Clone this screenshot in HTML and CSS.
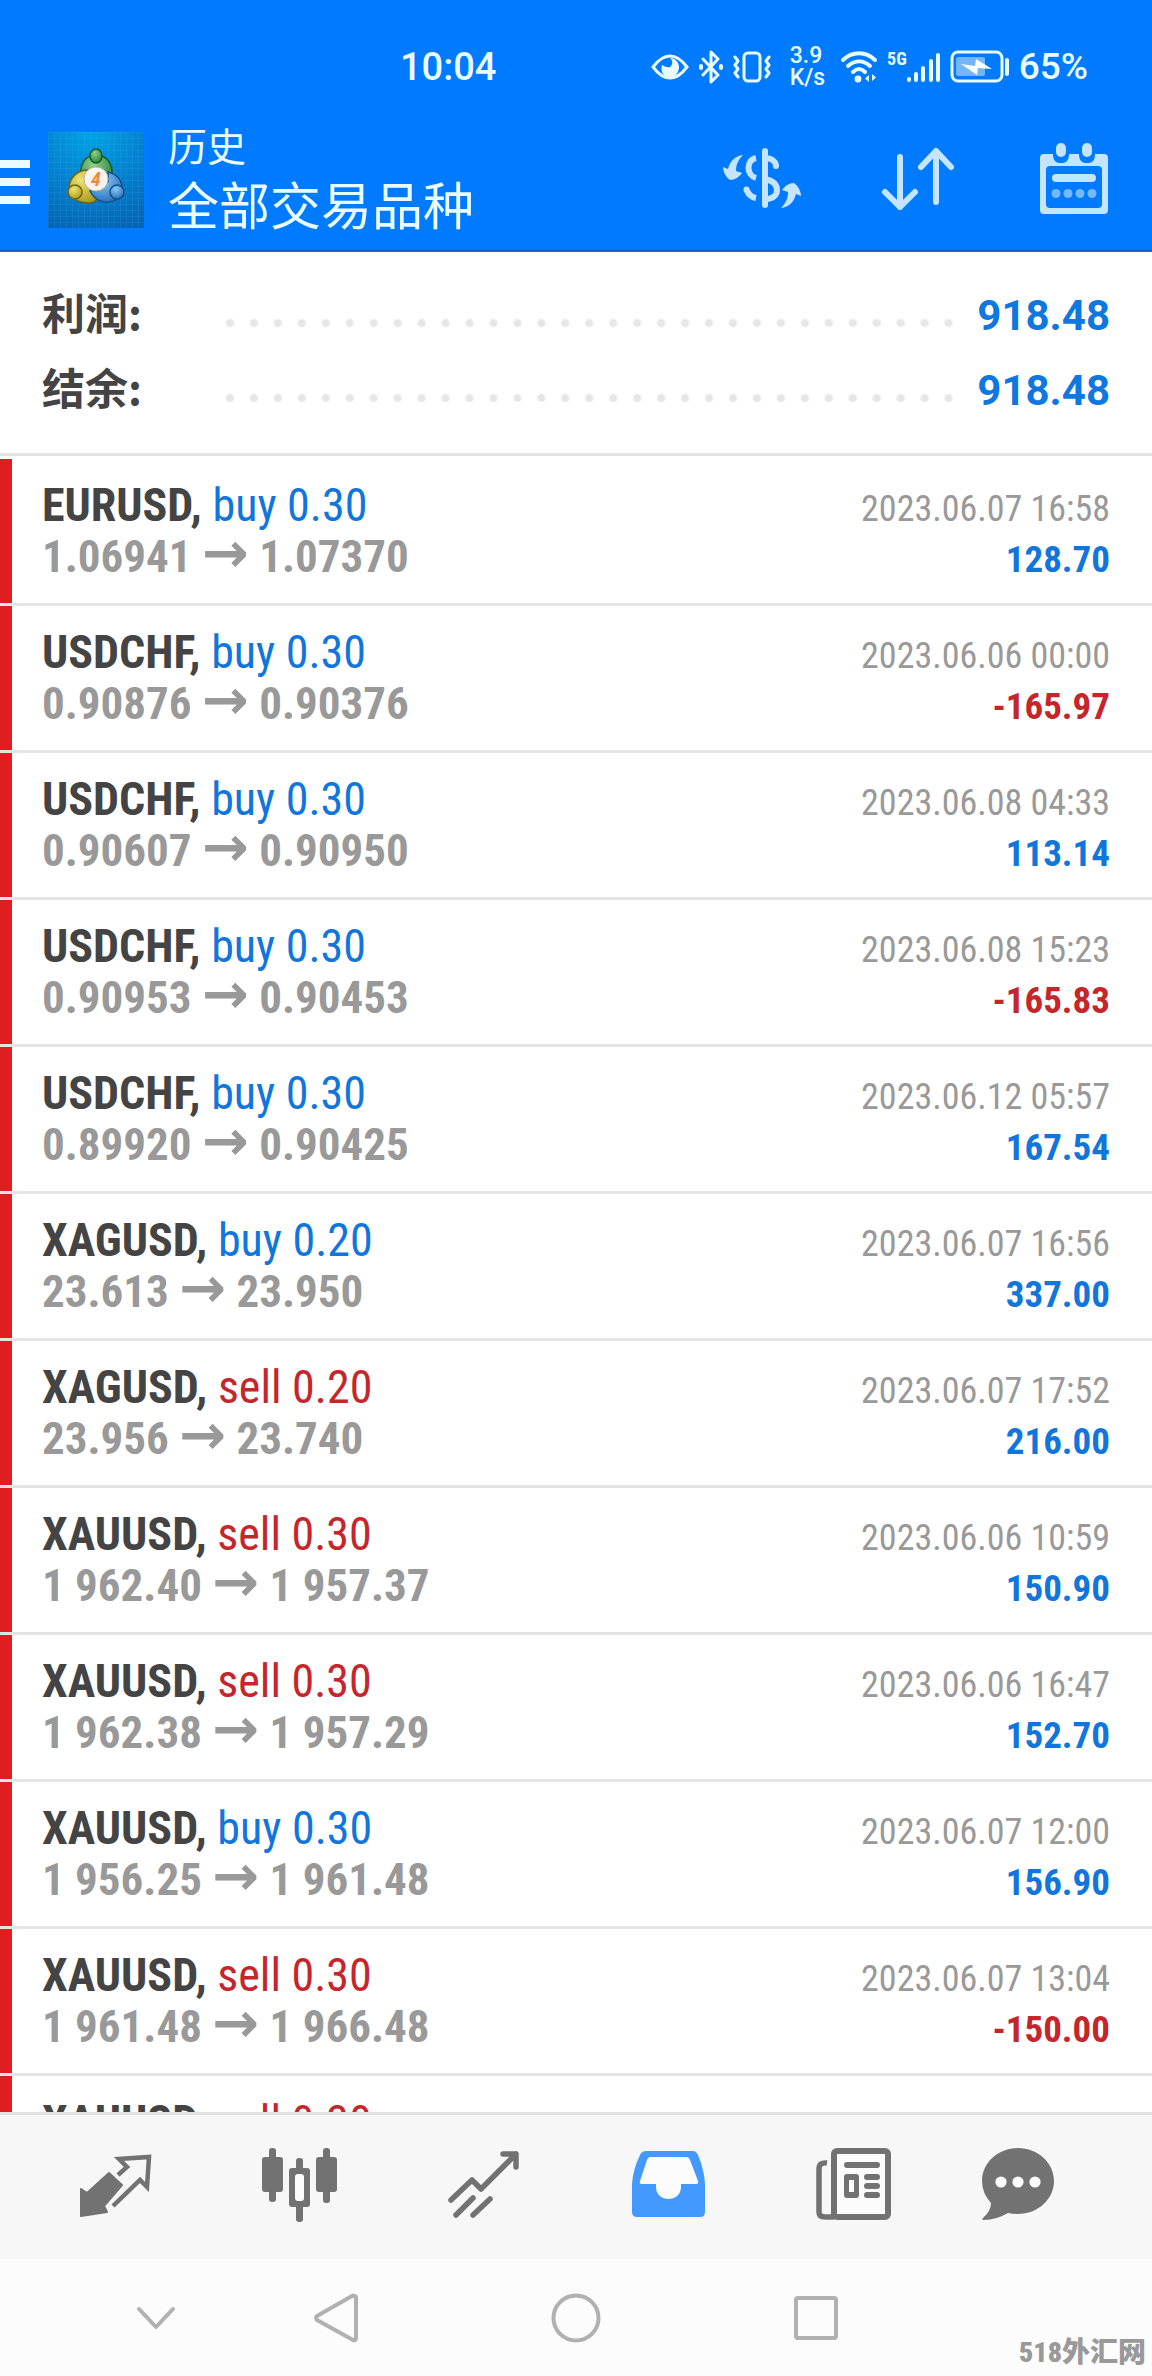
FILE: index.html
```html
<!DOCTYPE html>
<html lang="zh-CN">
<head>
<meta charset="utf-8">
<meta name="viewport" content="width=device-width, initial-scale=1">
<title>历史</title>
<link rel="stylesheet" href="styles.css">
</head>
<body>
<div class="app">
  <header class="header">
    <div class="status">
      <span class="clock">10:04</span>
      <div class="indicators">
        <svg width="38" height="28" viewBox="0 0 38 28"><path d="M2 14C8 6 13 3 19 3s11 3 17 11c-6 8-11 11-17 11S8 22 2 14z" fill="none" stroke="currentColor" stroke-width="3"/><path d="M19 5c3 2 3 7 0 9-3 1-6-1-8-2-2 7 2 12 8 12 5 0 9-4 9-10 0-5-4-9-9-9z" fill="currentColor"/></svg>
        <svg width="26" height="34" viewBox="0 0 26 34" fill="none" stroke="currentColor" stroke-width="3" stroke-linejoin="round" stroke-linecap="round"><path d="M5 9l15 16-7 7V2l7 7L5 25"/><path d="M3 16v2M23 16v2" stroke-width="4"/></svg>
        <svg width="38" height="34" viewBox="0 0 38 34" fill="none" stroke="currentColor" stroke-width="3" stroke-linejoin="round" stroke-linecap="round"><rect x="11" y="3" width="16" height="28" rx="4"/><path d="M2 7l3 4-3 4 3 4-3 4 3 4M36 7l-3 4 3 4-3 4 3 4-3 4"/></svg>
        <span class="speed"><span>3.9</span><span>K/s</span></span>
        <svg width="38" height="34" viewBox="0 0 38 34" fill="none" stroke="currentColor" stroke-width="4" stroke-linecap="round"><path d="M3 10c9-9 23-9 32 0M8 16c7-6 15-6 22 0M13 22c4-4 8-4 12 0"/><circle cx="18" cy="29" r="3.400" fill="currentColor" stroke="none"/><path d="M29 25v7l-4-3.500zM32 24v7l4-3.500z" fill="currentColor" stroke="none"/></svg>
        <span class="cell"><span class="gen">5G</span>
        <svg width="34" height="32" viewBox="0 0 34 32" stroke="currentColor" stroke-width="4" stroke-linecap="round"><path d="M2 28v1M9 23v6M16 17v12M24 10v19M31 4v25"/></svg></span>
        <svg width="60" height="34" viewBox="0 0 60 34"><rect x="2" y="2" width="50" height="29" rx="6" fill="none" stroke="currentColor" stroke-width="3"/><rect x="6" y="7" width="29" height="19" rx="2" fill="#fff" opacity=".45"/><path d="M57 10v14" stroke="currentColor" stroke-width="4" stroke-linecap="round"/><path d="M11 14l14 2 1-7 16 10-14-1-1 7z" fill="#fff"/></svg>
        <span class="charge">65%</span>
      </div>
    </div>
    <div class="appbar">
      <button class="menu" aria-label="菜单"><svg width="30" height="44" viewBox="0 0 30 44" fill="currentColor"><path d="M0 0h30v8H0zM0 18h30v8H0zM0 36h30v8H0z"/></svg></button>
      <svg class="logo" width="96" height="96" viewBox="0 0 96 96">
        <defs>
          <radialGradient id="sea" cx=".45" cy="0" r="1.100"><stop offset="0" stop-color="#00a3e6"/><stop offset=".5" stop-color="#0381d0"/><stop offset="1" stop-color="#0562b2"/></radialGradient>
          <radialGradient id="green" cx=".4" cy=".3" r=".8"><stop offset="0" stop-color="#8fd08a"/><stop offset="1" stop-color="#1f7a34"/></radialGradient>
          <radialGradient id="gold" cx=".4" cy=".3" r=".8"><stop offset="0" stop-color="#f0e370"/><stop offset="1" stop-color="#a8941a"/></radialGradient>
          <radialGradient id="blue" cx=".4" cy=".3" r=".8"><stop offset="0" stop-color="#8cc8f4"/><stop offset="1" stop-color="#1a69b8"/></radialGradient>
          <pattern id="mesh" width="6" height="6" patternUnits="userSpaceOnUse"><path d="M0 .5h6M.5 0v6" stroke="#5cc4f0" stroke-width=".6" opacity=".2"/></pattern>
        </defs>
        <rect width="96" height="96" fill="url(#sea)"/><rect width="96" height="96" fill="url(#mesh)"/>
        <g stroke-width="1.500">
          <path d="M33 42c-1-11 5-19 15-19s17 8 16 20c0 5-2 9-4 11L48 40l-9 9c-3-1-6-4-6-7z" fill="url(#green)" stroke="#175a28"/>
          <path d="M40 38c-11 0-19 8-19 19 1 9 9 14 20 14 4 0 7-2 9-5L38 50z" fill="url(#gold)" stroke="#6c6418"/>
          <path d="M60 40c9 2 15 9 14 18-1 8-8 13-18 12-7-1-11-5-14-11l18-9z" fill="url(#blue)" stroke="#154e8c"/>
          <ellipse cx="48" cy="24" rx="6" ry="7" fill="url(#green)" stroke="#175a28"/>
          <circle cx="27" cy="60" r="7" fill="url(#gold)" stroke="#6c6418"/>
          <circle cx="69" cy="60" r="7" fill="url(#blue)" stroke="#154e8c"/>
        </g>
        <circle cx="48" cy="47" r="12" fill="#f7f3f0" stroke="#b9b6a4"/>
        <text class="logo-digit" x="48" y="54" text-anchor="middle">4</text>
      </svg>
      <div class="titles"><p class="section">历史</p><h1 class="scope">全部交易品种</h1></div>
      <div class="actions">
        <button aria-label="交易品种"><svg width="80" height="80" viewBox="0 0 80 80" fill="none" stroke="currentColor" stroke-width="6"><path d="M43 11v54M43 18c7 0 11 4 11 8" stroke-linecap="round"/><path d="M43 39c9 2 12 6 12 11 0 6-5 9-12 9"/><path d="M34 18c-10 2-10 17 0 20"/><path d="M25 50c1 4 4 7 9 8"/><path d="M24.500 49.500v.5" stroke-linecap="round"/><g fill="currentColor" stroke="none"><path d="M21 15C13 16 8 21 6 29L1 27c0 5 3 10 7 13 5 0 9-3 12-7l-6-2c0-6 2-11 7-16z"/><path transform="rotate(180 40 41.500)" d="M21 15C13 16 8 21 6 29L1 27c0 5 3 10 7 13 5 0 9-3 12-7l-6-2c0-6 2-11 7-16z"/></g></svg></button>
        <button aria-label="排序"><svg width="80" height="80" viewBox="0 0 80 80" fill="none" stroke="currentColor" stroke-width="6" stroke-linecap="round" stroke-linejoin="round"><path d="M22 17v50M7 52l15 15 15-15M58 62V11M43 27l15-16 15 16"/></svg></button>
        <button aria-label="日期"><svg width="80" height="80" viewBox="0 0 80 80" fill="currentColor"><path fill-rule="evenodd" d="M10 14h9c0 8 4 9 8 9s8-1 8-9h10c0 8 4 9 8 9s8-1 8-9h9q4 0 4 4v52q0 4-4 4H10q-4 0-4-4V18q0-4 4-4zm6 12q-4 0-4 4v34q0 4 4 4h48q4 0 4-4V30q0-4-4-4z"/><rect x="22" y="3" width="10" height="14" rx="5"/><rect x="48" y="3" width="10" height="14" rx="5"/><rect x="18" y="34" width="44" height="8" rx="4"/><g opacity=".6"><circle cx="22" cy="53.500" r="4.500"/><circle cx="34" cy="53.500" r="4.500"/><circle cx="46" cy="53.500" r="4.500"/><circle cx="58" cy="53.500" r="4.500"/></g></svg></button>
      </div>
    </div>
  </header>

  <dl class="summary">
    <div class="total"><dt>利润:</dt><dd>918.48</dd></div>
    <div class="total"><dt>结余:</dt><dd>918.48</dd></div>
  </dl>

  <main class="history">
    <ul class="deals">
      <li class="deal"><span class="name">EURUSD, <span class="buy">buy 0.30</span></span><time>2023.06.07 16:58</time><span class="prices">1.06941 <i>→</i> 1.07370</span><span class="profit">128.70</span></li>
      <li class="deal"><span class="name">USDCHF, <span class="buy">buy 0.30</span></span><time>2023.06.06 00:00</time><span class="prices">0.90876 <i>→</i> 0.90376</span><span class="profit loss">-165.97</span></li>
      <li class="deal"><span class="name">USDCHF, <span class="buy">buy 0.30</span></span><time>2023.06.08 04:33</time><span class="prices">0.90607 <i>→</i> 0.90950</span><span class="profit">113.14</span></li>
      <li class="deal"><span class="name">USDCHF, <span class="buy">buy 0.30</span></span><time>2023.06.08 15:23</time><span class="prices">0.90953 <i>→</i> 0.90453</span><span class="profit loss">-165.83</span></li>
      <li class="deal"><span class="name">USDCHF, <span class="buy">buy 0.30</span></span><time>2023.06.12 05:57</time><span class="prices">0.89920 <i>→</i> 0.90425</span><span class="profit">167.54</span></li>
      <li class="deal"><span class="name">XAGUSD, <span class="buy">buy 0.20</span></span><time>2023.06.07 16:56</time><span class="prices">23.613 <i>→</i> 23.950</span><span class="profit">337.00</span></li>
      <li class="deal"><span class="name">XAGUSD, <span class="sell">sell 0.20</span></span><time>2023.06.07 17:52</time><span class="prices">23.956 <i>→</i> 23.740</span><span class="profit">216.00</span></li>
      <li class="deal"><span class="name">XAUUSD, <span class="sell">sell 0.30</span></span><time>2023.06.06 10:59</time><span class="prices">1 962.40 <i>→</i> 1 957.37</span><span class="profit">150.90</span></li>
      <li class="deal"><span class="name">XAUUSD, <span class="sell">sell 0.30</span></span><time>2023.06.06 16:47</time><span class="prices">1 962.38 <i>→</i> 1 957.29</span><span class="profit">152.70</span></li>
      <li class="deal"><span class="name">XAUUSD, <span class="buy">buy 0.30</span></span><time>2023.06.07 12:00</time><span class="prices">1 956.25 <i>→</i> 1 961.48</span><span class="profit">156.90</span></li>
      <li class="deal"><span class="name">XAUUSD, <span class="sell">sell 0.30</span></span><time>2023.06.07 13:04</time><span class="prices">1 961.48 <i>→</i> 1 966.48</span><span class="profit loss">-150.00</span></li>
      <li class="deal"><span class="name">XAUUSD, <span class="sell">sell 0.30</span></span><time>2023.06.07 17:44</time></li>
    </ul>
  </main>

  <nav class="tabs">
    <a href="#quotes" aria-label="行情"><svg width="120" height="80" viewBox="0 0 120 80"><path d="M25 44l6 4 22-20 13 12-18 21 3 6-26 4z" fill="currentColor" stroke="currentColor" stroke-width="2" stroke-linejoin="round"/><path d="M62 30l9-8-8-8 30-2-2 30-7-7-27 26" fill="none" stroke="currentColor" stroke-width="4.500"/></svg></a>
    <a href="#charts" aria-label="图表"><svg width="120" height="80" viewBox="0 0 120 80" fill="currentColor"><rect x="22" y="12" width="21" height="35" rx="3"/><rect x="29" y="3" width="7" height="54" rx="3"/><rect x="49" y="23" width="21" height="39" rx="3"/><rect x="56" y="13" width="7" height="64" rx="3"/><rect x="55" y="29" width="9" height="27" rx="3" fill="#fcfcfc"/><rect x="76" y="12" width="21" height="35" rx="3"/><rect x="83" y="3" width="7" height="55" rx="3"/></svg></a>
    <a href="#trade" aria-label="交易"><svg width="120" height="80" viewBox="0 0 120 80" fill="none" stroke="currentColor" stroke-width="5.500" stroke-linecap="round" stroke-linejoin="round"><path d="M27 55l21-20 9 9L92 9M79 9h13v13"/><path d="M32 70l17-17M49 70l17-16"/></svg></a>
    <a href="#history" class="current" aria-label="历史" aria-current="page"><svg width="120" height="80" viewBox="0 0 120 80"><path d="M38 6h47q3 0 5 4 6 14 7 29v28q0 5-5 5H29q-5 0-5-5V39q1-15 8-29 2-4 6-4z" fill="currentColor"/><path d="M42 12h36q3 0 4 3l8 21q1 3-2 3H73v3c0 16-25 16-25 0v-3H34q-3 0-2-3l7-21q1-3 3-3z" fill="#fcfcfc"/></svg></a>
    <a href="#news" aria-label="新闻"><svg width="120" height="80" viewBox="0 0 120 80"><rect x="42" y="6" width="54" height="66" rx="3" fill="#fcfcfc" stroke="currentColor" stroke-width="6"/><path d="M35 18q-8-1-8 6v43q0 5 6 5h9" fill="none" stroke="currentColor" stroke-width="5.500"/><g fill="currentColor"><rect x="52" y="17" width="36" height="6" rx="3"/><rect x="72" y="29" width="16" height="6" rx="3"/><rect x="72" y="38" width="16" height="6" rx="3"/><rect x="72" y="47" width="16" height="6" rx="3"/><path fill-rule="evenodd" d="M55 29h9q3 0 3 3v18q0 3-3 3h-9q-3 0-3-3V32q0-3 3-3zm2 6v12h5V35z"/></g></svg></a>
    <a href="#messages" aria-label="消息"><svg width="120" height="80" viewBox="0 0 120 80"><path d="M42 3c20 0 36 15 36 33S62 69 42 69q-6 0-10-1-12 7-24 7-3 0-1-2 8-7 8-15Q6 48 6 36C6 18 22 3 42 3z" fill="currentColor"/><g fill="#fcfcfc"><circle cx="25" cy="37" r="5.600"/><circle cx="42" cy="37" r="5.600"/><circle cx="59" cy="37" r="5.600"/></g></svg></a>
  </nav>

  <footer class="system">
    <button class="hide" aria-label="收起"><svg width="40" height="24" viewBox="0 0 40 24"><path d="M3 3l17 18L37 3"/></svg></button>
    <button aria-label="返回"><svg width="48" height="52" viewBox="0 0 48 52"><path d="M42 4q2 0 2 2v40q0 3-3 2L5 28q-2-2 0-4L40 4q1-1 2 0z"/></svg></button>
    <button aria-label="主页"><svg width="52" height="52" viewBox="0 0 52 52"><circle cx="26" cy="26" r="22.500"/></svg></button>
    <button aria-label="最近任务"><svg width="48" height="48" viewBox="0 0 48 48"><rect x="4" y="4" width="40" height="40" rx="2"/></svg></button>
    <span class="mark">518外汇网</span>
  </footer>
</div>
</body>
</html>
```
FILE: styles.css
```css
* { box-sizing: border-box; margin: 0; padding: 0; }

body {
  font-family: "Roboto Condensed", Inter, "Noto Sans CJK SC", sans-serif;
  background: #fff;
  color: #444;
}

button { background: none; border: 0; color: inherit; display: flex; justify-content: center; align-items: center; }
svg { display: block; flex: none; }
ul { list-style: none; }

.app { display: flex; flex-direction: column; height: 100vh; }

.header { background: #007aff; color: #e9fcff; border-bottom: 3px solid #0f69d6; }

.status {
  display: flex;
  align-items: center;
  justify-content: space-between;
  height: 110px;
  padding: 24px 64px 0 calc(50% - 176px);
  font-family: Roboto, sans-serif;
}
.clock, .charge { font-size: 38px; line-height: 48px; font-weight: 500; }
.charge { font-size: 37px; }
.indicators { display: flex; align-items: center; gap: 9px; }
.speed { display: flex; flex-direction: column; font-size: 23px; line-height: 22px; font-weight: 500; margin: 0 6px 0 10px; }
.cell { display: flex; align-items: flex-start; }
.gen { font-family: "Roboto Condensed", sans-serif; font-size: 18px; line-height: 16px; font-weight: 700; }

.appbar { display: flex; align-items: center; height: 139px; }
.menu { padding-top: 4px; }
.logo { margin-left: 18px; }
.logo-digit { font: italic 700 20px "Roboto Condensed", sans-serif; fill: #ee8a3c; }
.titles { margin-left: 24px; padding-bottom: 6px; font-family: "Noto Sans CJK SC", sans-serif; white-space: nowrap; }
.section { font-size: 39px; line-height: 52px; }
.scope { font-size: 51px; line-height: 66px; font-weight: 400; }
.actions { display: flex; margin-left: auto; color: #c5e4ff; }
.actions button { width: 156px; }

.summary { padding: 22px 42px 29px; border-bottom: 3px solid #e4e4e4; }
.total { display: flex; align-items: baseline; height: 75px; }
.total::after {
  content: "";
  align-self: center;
  order: 1;
  flex: 1;
  height: 24px;
  margin: 22px 16px 0 0;
  background: radial-gradient(circle, #e6e6e6 3px, transparent 5px) 0 0 / 24px 24px round;
}
.total dt { width: 176px; font: 700 43px/75px "Noto Sans CJK SC", sans-serif; }
.total dd { order: 2; font: 700 42px/75px Roboto, sans-serif; color: #0f77e0; }

.history { flex: 1; min-height: 0; overflow: hidden; padding-top: 3px; }
.deal {
  display: grid;
  grid-template-columns: 1fr auto;
  grid-template-rows: 51px 51px;
  align-items: baseline;
  height: 147px;
  padding: 21px 42px 0;
  background: linear-gradient(#e01e20, #e01e20) 0 0 / 12px 144px no-repeat;
  border-bottom: 3px solid #e4e4e4;
  line-height: 51px;
}
.name { font-size: 46px; font-weight: 700; }
.prices { font-size: 45px; font-weight: 700; color: #999; }
.prices i { font-family: "DejaVu Sans", sans-serif; font-style: normal; font-size: 56px; line-height: 40px; }
.buy, .sell { font-weight: 400; }
.buy { color: #1176dc; }
.sell { color: #c4262b; }
.deal time { font-size: 36px; color: #999; text-align: right; }
.profit { font-size: 37px; font-weight: 700; color: #1176dc; text-align: right; }
.loss { color: #c4262b; }

.tabs {
  display: flex;
  height: 147px;
  padding: 0 24px 4px;
  border-top: 3px solid #e2e2e2;
  background: #f7f7f7;
  color: #727272;
}
.tabs a { flex: 1; display: flex; align-items: center; justify-content: center; color: inherit; }
.tabs .current { color: #4499fe; }

.system { position: relative; display: flex; height: 117px; padding-left: 96px; background: #fcfcfc; }
.system button { width: 240px; }
.system .hide { width: 120px; }
.system svg { fill: none; stroke: #b1b1b1; stroke-width: 4; stroke-linecap: round; stroke-linejoin: round; }
.mark { position: absolute; right: 6px; bottom: 3px; font: 900 28px/40px "Roboto Condensed", "Noto Sans CJK SC", sans-serif; color: #999; }
```
